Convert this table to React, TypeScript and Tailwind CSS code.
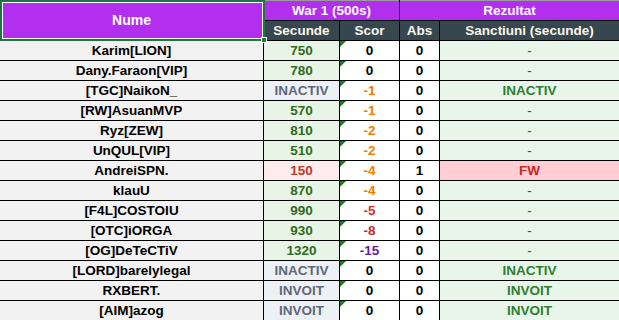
import React from "react";

type Row = {
  name: string;
  sec: string;
  scor: string;
  abs: string;
  sanc: string;
};

const rows: Row[] = [
  { name: "Karim[LION]", sec: "750", scor: "0", abs: "0", sanc: "-" },
  { name: "Dany.Faraon[VIP]", sec: "780", scor: "0", abs: "0", sanc: "-" },
  { name: "[TGC]NaikoN_", sec: "INACTIV", scor: "-1", abs: "0", sanc: "INACTIV" },
  { name: "[RW]AsuanMVP", sec: "570", scor: "-1", abs: "0", sanc: "-" },
  { name: "Ryz[ZEW]", sec: "810", scor: "-2", abs: "0", sanc: "-" },
  { name: "UnQUL[VIP]", sec: "510", scor: "-2", abs: "0", sanc: "-" },
  { name: "AndreiSPN.", sec: "150", scor: "-4", abs: "1", sanc: "FW" },
  { name: "klauU", sec: "870", scor: "-4", abs: "0", sanc: "-" },
  { name: "[F4L]COSTOIU", sec: "990", scor: "-5", abs: "0", sanc: "-" },
  { name: "[OTC]iORGA", sec: "930", scor: "-8", abs: "0", sanc: "-" },
  { name: "[OG]DeTeCTiV", sec: "1320", scor: "-15", abs: "0", sanc: "-" },
  { name: "[LORD]barelylegal", sec: "INACTIV", scor: "0", abs: "0", sanc: "INACTIV" },
  { name: "RXBERT.", sec: "INVOIT", scor: "0", abs: "0", sanc: "INVOIT" },
  { name: "[AIM]azog", sec: "INVOIT", scor: "0", abs: "0", sanc: "INVOIT" },
];

function secClass(s: string) {
  if (s === "INACTIV" || s === "INVOIT") return "bg-[#edf0f4] text-[#5d6878]";
  if (s === "150") return "bg-[#fdebee] text-[#c0392b]";
  return "bg-[#e8f4e6] text-[#2f6b22]";
}

function scorClass(s: string) {
  switch (s) {
    case "-1":
    case "-2":
    case "-4":
      return "text-[#f57c00]";
    case "-5":
      return "text-[#d9302a]";
    case "-8":
      return "text-[#c62838]";
    case "-15":
      return "text-[#6a1b9a]";
    default:
      return "text-black";
  }
}

function sancClass(s: string) {
  if (s === "FW") return "bg-[#ffcdd2] text-[#c62828]";
  if (s === "-") return "bg-[#e8f5e9] text-[#2e5d22] font-normal";
  return "bg-[#e8f5e9] text-[#2e7d32]";
}

const cell = "flex items-center justify-center font-bold leading-none";

export default function App() {
  return (
    <div
      className="relative w-[619px] h-[320px] overflow-hidden bg-white"
      style={{ fontFamily: '"Liberation Sans", Arial, sans-serif' }}
    >
      <div className="grid grid-cols-[263px_75px_59px_39px_179px] grid-rows-[20px_19px_repeat(14,19px)] gap-px bg-black text-[13.5px]">
        <div className={`${cell} row-span-2 bg-[#b32ff0] text-white text-[14px]`}>Nume</div>
        <div className={`${cell} col-span-2 bg-[#b32ff0] text-white border-t border-[#9a9a9a]`}>War 1 (500s)</div>
        <div className={`${cell} col-span-2 bg-[#b32ff0] text-white border-t border-[#9a9a9a]`}>Rezultat</div>
        <div className={`${cell} bg-[#37474f] text-[#fbf6ea]`}>Secunde</div>
        <div className={`${cell} bg-[#37474f] text-[#fbf6ea]`}>Scor</div>
        <div className={`${cell} bg-[#37474f] text-[#fbf6ea]`}>Abs</div>
        <div className={`${cell} bg-[#37474f] text-[#fbf6ea]`}>Sanctiuni (secunde)</div>
        {rows.map((r) => (
          <React.Fragment key={r.name}>
            <div className={`${cell} bg-[#f2f2f2] text-black`}>{r.name}</div>
            <div className={`${cell} ${secClass(r.sec)}`}>{r.sec}</div>
            <div className={`${cell} relative bg-white ${scorClass(r.scor)}`}>
              <span className="absolute left-0 top-0 w-0 h-0 border-t-[6px] border-r-[6px] border-t-[#1e7a1e] border-r-transparent" />
              {r.scor}
            </div>
            <div className={`${cell} bg-white text-black`}>{r.abs}</div>
            <div className={`${cell} ${sancClass(r.sanc)}`}>{r.sanc}</div>
          </React.Fragment>
        ))}
      </div>
      <div className="pointer-events-none absolute left-0 top-0 w-[265px] h-[41px] border-2 border-[#217346]">
        <div className="absolute inset-0 border border-white" />
      </div>
      <div className="pointer-events-none absolute left-[261px] top-[37px] w-[6px] h-[6px] bg-[#217346] border border-white" />
    </div>
  );
}
